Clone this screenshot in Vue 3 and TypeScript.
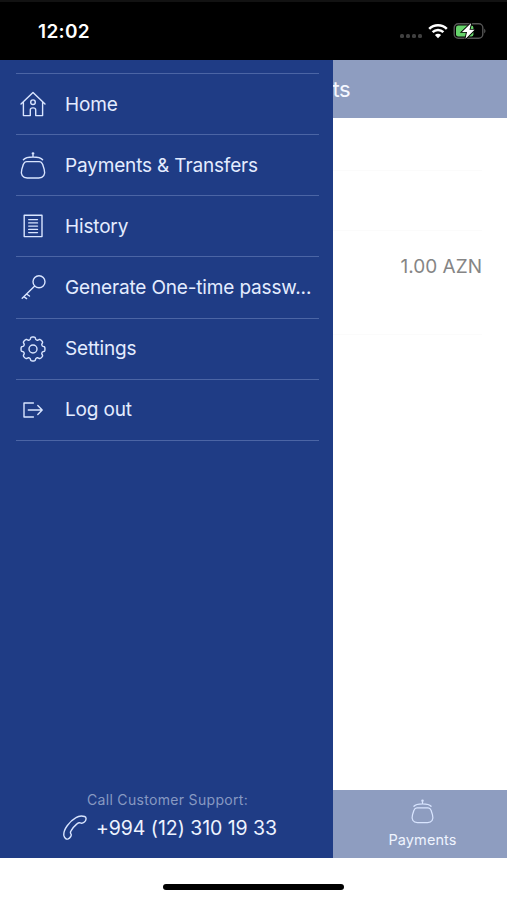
<script setup lang="ts">
type IconName = 'home' | 'purse' | 'history' | 'key' | 'gear' | 'logout'

interface MenuItem {
  icon: IconName
  label: string
}

const menu: MenuItem[] = [
  { icon: 'home', label: 'Home' },
  { icon: 'purse', label: 'Payments & Transfers' },
  { icon: 'history', label: 'History' },
  { icon: 'key', label: 'Generate One-time passw...' },
  { icon: 'gear', label: 'Settings' },
  { icon: 'logout', label: 'Log out' },
]

// Outline of a cog with eight wide teeth, centred in a 28px box.
function cogPath(): string {
  const points: string[] = []
  for (let i = 0; i < 128; i++) {
    const angle = (i / 128) * Math.PI * 2
    const wave = Math.cos(angle * 8) + 0.3
    const r = 10.8 + 1.15 * Math.tanh(wave * 2.4)
    points.push(`${(14 + r * Math.cos(angle)).toFixed(2)} ${(14 + r * Math.sin(angle)).toFixed(2)}`)
  }
  return `M${points.join('L')}Z`
}

const icons: Record<IconName, string> = {
  home: 'M2 14.1 14 2.4 26 14.1M4.4 12V25.6H11.3V19.8Q11.3 17.9 14 17.9T16.7 19.8V25.6H23.6V12M16.3 12.2a2.3 2.3 0 1 1-4.6 0a2.3 2.3 0 1 1 4.6 0',
  purse: 'M14 2.6V5.8M14.7 2.6a.7.7 0 1 1-1.4 0a.7.7 0 1 1 1.4 0M4.4 8.7C6 6.8 9.5 6 14 6S22 6.8 23.6 8.7M7.8 10.6H20.2C22.3 10.6 22.9 11.5 23.7 13.5L25.2 18.4C26.7 23.6 24.3 27 19.8 27H8.2C3.7 27 1.3 23.6 2.8 18.4L4.3 13.5C5.1 11.5 5.7 10.6 7.8 10.6Z',
  history: 'M5.2 3.2H23V24.6H5.2ZM9.7 7.6H18.5M9.7 10.9H18.5M9.7 14.1H18.5M9.7 17.4H18.5M9.7 20.6H18.5',
  key: 'M26 8.8a6 6 0 1 1-12 0a6 6 0 1 1 12 0M15.7 13.1 3.2 25.2M4.8 23.7 7.6 25.6M7.5 21 10.5 23',
  gear: cogPath() + 'M18 14a4 4 0 1 1-8 0a4 4 0 1 1 8 0',
  logout: 'M14.4 7H5V21H14.4M9.3 14H23M18.8 9.6 23.2 14 18.8 18.4',
}
</script>

<template>
  <div class="phone">
    <header class="status">
      <span class="clock">12:02</span>
      <div class="signals">
        <span class="dots"><i v-for="n in 4" :key="n"></i></span>
        <svg class="wifi" width="20" height="16" viewBox="0 0 20 16">
          <path d="M1.2 5.8C6 .9 14 .9 18.8 5.8M4.6 9.2C7.7 6.2 12.3 6.2 15.4 9.2" />
          <path class="wifi-base" d="M10 15.2 6.9 12C8.7 10.4 11.3 10.4 13.1 12Z" />
        </svg>
        <svg class="battery" width="34" height="18" viewBox="0 0 34 18">
          <rect class="shell" x="1.2" y="1.8" width="28.6" height="14.4" rx="4" />
          <path class="tip" d="M31.3 6.5Q33.6 9 31.3 11.5Z" />
          <rect class="charge" x="3" y="3.6" width="17.4" height="10.8" rx="2.2" />
          <path class="bolt" d="M18.2 1.1 9 9.9H14L12.4 17 21.6 7.8H16.5Z" />
        </svg>
      </div>
    </header>

    <div class="body">
      <nav class="drawer">
        <ul class="menu">
          <li v-for="item in menu" :key="item.icon">
            <svg class="icon" width="28" height="28" viewBox="0 0 28 28"><path :d="icons[item.icon]" /></svg>
            <span class="label">{{ item.label }}</span>
          </li>
        </ul>
        <div class="support">
          <span class="caption">Call Customer Support:</span>
          <div class="call">
            <svg class="icon" width="26" height="26" viewBox="0 0 26 26">
              <path d="M14 2.6C16.3 1.1 20.4 .8 22.6 1.5C24.9 2.3 24.2 5.5 22.4 7C21.1 8.1 19.4 8.4 18.3 7.9C17.2 7.4 16.2 7.7 14.9 8.9C12.5 11 10.3 13.4 9 15.8C8.2 17.2 8.3 18.2 9 19.1C10 20.6 7.8 23.1 6.2 23.9C4.1 24.7 2.4 22.8 1.9 20.5C.9 15 7.7 6 14 2.6Z" />
            </svg>
            <span class="number">+994 (12) 310 19 33</span>
          </div>
        </div>
      </nav>

      <main class="page">
        <div class="titlebar"><span>ts</span></div>
        <div class="rows">
          <div class="row short"></div>
          <div class="row"></div>
          <div class="row amount"><span>1.00 AZN</span></div>
        </div>
        <div class="tab">
          <svg class="icon" width="25" height="26" viewBox="0 0 28 28"><path :d="icons.purse" /></svg>
          <span>Payments</span>
        </div>
      </main>
    </div>

    <footer class="home-area"><div class="indicator"></div></footer>
  </div>
</template>

<style>
body {
  background: #fff;
}
</style>

<style scoped>
.phone {
  display: flex;
  flex-direction: column;
  width: 507px;
  height: 900px;
  overflow: hidden;
  background: #fff;
  font-family: Inter, 'Liberation Sans', sans-serif;
}
.status {
  box-sizing: border-box;
  flex: none;
  display: flex;
  justify-content: space-between;
  align-items: center;
  height: 60px;
  padding: 1px 20px 0 38px;
  border-top: 2px solid #121212;
  background: #000;
  color: #fff;
}
.clock {
  font-size: 19px;
  font-weight: 600;
  letter-spacing: 0.35px;
}
.signals {
  display: flex;
  align-items: center;
}
.dots {
  display: flex;
  gap: 2px;
  margin: 9px 6px 0 0;
}
.dots i {
  width: 4px;
  height: 4px;
  border-radius: 1.5px;
  background: #404040;
}
.wifi {
  margin: -2px 5px 0 0;
  fill: none;
  stroke: #fff;
  stroke-width: 2.5;
}
.wifi-base {
  fill: #fff;
  stroke: none;
}
.battery {
  margin-top: -1px;
}
.shell {
  fill: none;
  stroke: #555;
  stroke-width: 1.4;
}
.tip {
  fill: #666;
}
.charge {
  fill: #65d36a;
}
.bolt {
  fill: #fff;
  stroke: #000;
  stroke-width: 1.8;
  paint-order: stroke;
}
.body {
  display: flex;
  height: 798px;
}
.drawer {
  box-sizing: border-box;
  flex: none;
  display: flex;
  flex-direction: column;
  justify-content: space-between;
  width: 333px;
  padding: 13px 14px 17px 16px;
  background: #1f3c85;
}
.menu {
  width: 303px;
  margin: 0;
  padding: 0;
  list-style: none;
  border-top: 1px solid #4b65a5;
}
.menu li {
  box-sizing: border-box;
  display: flex;
  align-items: center;
  height: 61.15px;
  padding: 0 0 0 3px;
  border-bottom: 1px solid #4b65a5;
}
.icon {
  flex: none;
  fill: none;
  stroke: #d9e5ff;
  stroke-width: 1.4;
  stroke-linecap: round;
  stroke-linejoin: round;
}
.menu .icon {
  margin-left: -0.5px;
}
.label {
  margin-left: 18.5px;
  padding-top: 1px;
  white-space: nowrap;
  color: #e4ecff;
  font-size: 19px;
  line-height: 28px;
  letter-spacing: -0.16px;
}
.support {
  display: flex;
  flex-direction: column;
  align-items: center;
}
.caption {
  color: #8799c2;
  font-size: 14px;
  line-height: 18px;
  letter-spacing: 0.32px;
}
.call {
  display: flex;
  align-items: center;
  gap: 8px;
  margin-top: 6px;
  margin-left: 4px;
}
.number {
  color: #edf3ff;
  font-size: 19.5px;
  line-height: 26px;
  letter-spacing: -0.05px;
}
.page {
  flex: 1;
  display: flex;
  flex-direction: column;
  min-width: 0;
  overflow: hidden;
}
.titlebar {
  display: flex;
  align-items: center;
  justify-content: flex-end;
  height: 58px;
  padding-right: 157px;
  background: #8e9dc0;
  color: #f5f8ff;
  font-size: 22px;
  letter-spacing: -0.6px;
}
.rows {
  flex: 1;
}
.row {
  box-sizing: border-box;
  height: 60px;
  margin-right: 25px;
  border-bottom: 1px solid #fbfbfb;
}
.row.short {
  height: 53px;
}
.row.amount {
  height: 104px;
  padding-top: 23px;
  text-align: right;
  color: #858585;
  font-size: 19px;
  line-height: 26px;
}
.tab {
  box-sizing: border-box;
  display: flex;
  flex-direction: column;
  align-items: center;
  height: 68px;
  padding: 8px 0 0 5px;
  background: #8e9dc0;
  color: #eff4ff;
  font-size: 14.5px;
  line-height: 18px;
  letter-spacing: 0.1px;
}
.tab span {
  margin-top: 7px;
}
.home-area {
  display: flex;
  justify-content: center;
  height: 42px;
}
.indicator {
  width: 181px;
  height: 6px;
  margin-top: 26px;
  border-radius: 3px;
  background: #000;
}
</style>
